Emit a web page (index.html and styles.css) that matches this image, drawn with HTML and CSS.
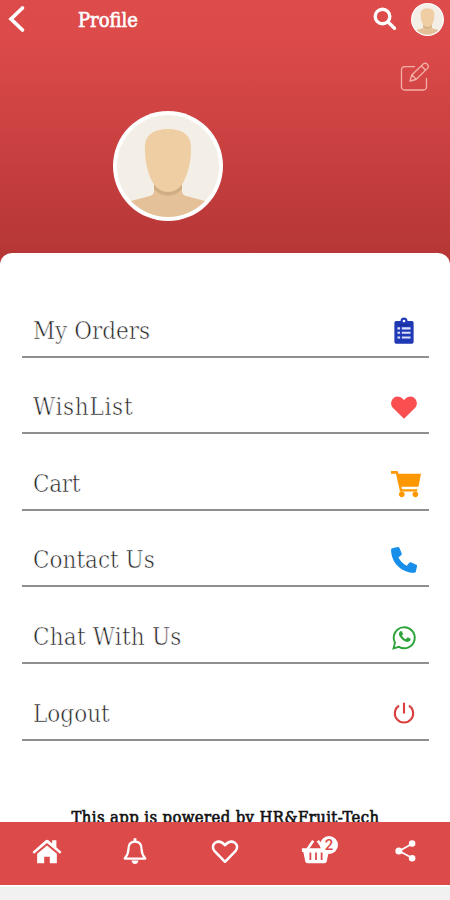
FILE: index.html
```html
<!DOCTYPE html>
<html lang="en">
<head>
<meta charset="utf-8">
<title>Profile</title>
<link rel="stylesheet" href="styles.css">
</head>
<body>
<svg class="defs" width="0" height="0">
  <symbol id="person" viewBox="0 0 110 110">
    <circle cx="55" cy="55" r="55" fill="#fff"/>
    <clipPath id="disc"><circle cx="55" cy="55" r="51"/></clipPath>
    <g clip-path="url(#disc)">
      <path fill="#f3eee6" d="M0 0h110v110H0z"/>
      <path fill="#e5c199" d="M41 70v10q0 4-4 5L18 90Q8 94 2 110h106q-6-16-16-20l-19-5q-4-1-4-5V70z"/>
      <path fill="#d1ad84" d="M41 72v6c8 9 20 9 28 0v-6z"/>
      <path fill="#efcea3" d="M32 38C31 24 41 18 55 18s24 6 23 20c0 13-3 25-8 34-4 6-9 9-15 9s-11-3-15-9c-5-9-8-21-8-34z"/>
    </g>
  </symbol>
</svg>
<div class="screen">
  <header class="hero">
    <div class="bar">
      <svg class="back" viewBox="0 0 18 28"><path d="M14.500 3 3 14l11.500 11"/></svg>
      <h1>Profile</h1>
      <svg class="search" viewBox="0 0 24 24"><circle cx="9.5" cy="9.5" r="7.300"/><path d="m15 15 6.500 6.300"/></svg>
      <svg class="mini"><use href="#person"/></svg>
    </div>
    <svg class="edit" viewBox="0 0 30 30"><path d="M15 4.700H4.500a3 3 0 0 0-3 3V25a3 3 0 0 0 3 3h19a3 3 0 0 0 3-3V16"/><path d="m10 19 1.800-6L23.500 1.800q2-1.300 3.800.4t.4 3.900L16 17.500zM12 13l4 4M21.500 4l4.200 4.200"/></svg>
    <svg class="avatar"><use href="#person"/></svg>
  </header>
  <main class="sheet">
    <ul class="menu">
      <li><span class="orders">My Orders</span>
        <svg viewBox="0 0 32 32"><path fill="#2039b5" d="M7 4.500h5q0-4 4-4t4 4h5q2 0 2 2v22q0 2-2 2H7q-2 0-2-2v-22q0-2 2-2z"/><circle cx="16" cy="4.500" r="1.500" fill="#fff"/><path d="M8.500 13h3m2 0h10M8.500 18h3m2 0h10M8.500 23.500h3m2 0h10" stroke="#dbe1ff" stroke-width="2.300"/><path d="M10.500 9h11" stroke="#152a91" stroke-width="1.500"/></svg></li>
      <li><span class="wish">WishList</span>
        <svg viewBox="0 0 32 32"><path fill="#fa4f50" d="M16 29.500 3.500 17C0 13.500.8 8 4.500 5.300c3.700-2.300 7.800-1.300 11.500 2.700 3.700-4 7.800-5 11.500-2.700 3.700 2.700 4.500 8.200 1 11.700z"/></svg></li>
      <li><span class="cart">Cart</span>
        <svg class="wide" viewBox="0 0 32 32"><path fill="#ff9800" d="M0 2h7l1 3h24l-2.700 14H11.200l.5 2.500h16.600l-.6 2.500H9.600L5.300 5H0z"/><circle cx="11.500" cy="27" r="3" fill="#ff9800"/><circle cx="26" cy="27" r="3" fill="#ff9800"/></svg></li>
      <li><span class="contact">Contact Us</span>
        <svg viewBox="0 0 32 32"><path fill="#168eea" d="m2.500 2.500 6.500-1.300q1.200-.2 1.700.9l2.700 6.500q.4 1-.5 1.800l-3.200 2.700q3.200 6.300 9.500 9.500l2.800-3.500q.7-.8 1.800-.4l6.200 2.700q1.200.5.9 1.800l-1.400 6.200q-.3 1.300-1.600 1.300C13 30.700 1.200 19 1.200 4q0-1.200 1.300-1.500z"/></svg></li>
      <li><span class="chat">Chat With Us</span>
        <svg viewBox="0 0 32 32"><path fill="none" stroke="#2da33b" stroke-width="2.200" d="m4 29 1.700-6.500A12 12 0 1 1 10.200 27.200z"/><path fill="#2da33b" d="M12 9.500c.7-.4 1.500-.3 1.800.4l1 2.300c.3.800-.8 1.600-1.200 2.100 1 2 2.300 3.200 4.500 4.200l1.500-1.700c.4-.5.800-.4 1.300-.2l2.200 1.100c.9.500.4 2.200-.5 3-1.500 1.300-3.300 1.100-5.600.1-3-1.300-5-3.700-6.300-6.200-1.100-2-.2-4.300 1.300-5.100z"/></svg></li>
      <li><span class="logout">Logout</span>
        <svg viewBox="0 0 32 32"><path fill="none" stroke="#dc3d3d" stroke-width="2.400" d="M10.300 6.400a10.500 10.500 0 1 0 11.400 0M16 3V15.500"/></svg></li>
    </ul>
    <p class="credit">This app is powered by HR&amp;Fruit-Tech</p>
  </main>
  <nav class="tabs">
    <svg class="home" viewBox="0 0 32 32"><path fill="#fff" d="m.5 17 14-12.500q1.500-1.200 3 0L21.500 8V4.500H26v7.500l5.500 5-1.700 2L16 7.500 2.200 19z"/><path fill="#fff" d="m16 10 10.500 9v10H19v-7h-6v7H5.500V19z"/></svg>
    <svg viewBox="0 0 32 32"><path fill="none" stroke="#fff" stroke-width="2.400" stroke-linejoin="round" d="M16 6c5.500 0 7 4 7 8 0 5 1.500 7 4 10H5c2.500-3 4-5 4-10 0-4 1.500-8 7-8z"/><path fill="#fff" d="M14.500 2.500h3v4h-3zM12.300 26h7.400q-.7 3.800-3.700 3.800T12.300 26z"/></svg>
    <svg viewBox="0 0 32 32"><path fill="none" stroke="#fff" stroke-width="2.700" stroke-linejoin="round" d="M16 27.500 4.900 16.200c-2.700-3-2.200-7 .6-9 3.300-2 7.300-1 10.500 2.700 3.200-3.700 7.200-4.700 10.500-2.700 2.800 2 3.300 6 .6 9z"/></svg>
    <div class="basket">
      <svg viewBox="0 0 32 32"><path fill="#fff" d="M1 13h30v4h-1.500l-2 10q-.4 2-2.500 2H7q-2.100 0-2.500-2l-2-10H1z"/><path fill="none" stroke="#fff" stroke-width="2.800" d="m7 14 6-9m11 9-6-9"/><path stroke="#dd4a4a" stroke-width="1.900" d="M10 17.500v8m6-8v8m6-8v8"/></svg>
      <b class="badge">2</b>
    </div>
    <svg class="share" viewBox="0 0 32 32"><path fill="none" stroke="#fff" stroke-width="2.200" d="M25 7 8 16.500 25 26"/><g fill="#fff"><circle cx="24.500" cy="7" r="4.200"/><circle cx="7.500" cy="16.500" r="4.500"/><circle cx="24.500" cy="26" r="4.200"/></g></svg>
  </nav>
</div>
</body>
</html>
```
FILE: styles.css
```css
* { box-sizing: border-box; }
body { margin: 0; background: #f1f1f1; font-family: "Roboto Slab", "DejaVu Serif Condensed", "DejaVu Serif", serif; }
svg { display: block; flex: none; }
.defs { position: absolute; }
.screen { display: flex; flex-direction: column; width: 450px; height: 900px; overflow: hidden; }
.hero { flex: none; height: 265px; background: linear-gradient(#dd4b4b 0, #dc4a4a 40px, #b63636 255px); }
.bar { display: flex; align-items: center; height: 38px; padding: 0 6px 0 8px; }
.back { width: 18px; height: 28px; fill: none; stroke: #fff; stroke-width: 3.7; stroke-linecap: round; }
h1 { margin: 0 auto 0 52px; padding-top: 1px; font-size: 20px; line-height: 40px; font-weight: 500; color: #fff; -webkit-text-stroke: .6px #fff; }
.search { width: 24px; height: 24px; margin-right: 14px; fill: none; stroke: #fff; stroke-width: 3.4; stroke-linecap: round; }
.mini { width: 33px; height: 33px; }
.edit { width: 30px; height: 30px; margin: 24px 20px 0 auto; fill: none; stroke: #f3b0a8; stroke-width: 1.3; stroke-linejoin: round; }
.avatar { width: 110px; height: 110px; margin: 19px 0 0 113.4px; }
.sheet { flex: none; height: 569px; margin-top: -12px; padding: 28px 21px 0 22px; border-radius: 12px 12px 0 0; background: #fff; overflow: hidden; }
.menu { margin: 0; padding: 0; list-style: none; }
.menu li { display: flex; align-items: flex-end; justify-content: space-between; height: 76.6px; padding: 0 11px 10px 11px; border-bottom: 2px solid #8f8f8f; font-size: 24px; line-height: 30px; color: #222; }
.menu span { -webkit-text-stroke: .55px #fff; }
.menu .wish { letter-spacing: .7px; }
.menu .chat { letter-spacing: .2px; }
.menu .cart { letter-spacing: -.3px; }
.menu svg { width: 28px; height: 28px; margin-bottom: 1px; }
.menu .wide { width: 30px; height: 30px; margin: 0 -3px 0 0; }
.credit { margin: 66px 0 0; text-align: center; white-space: nowrap; font-size: 16.5px; line-height: 22px; letter-spacing: .4px; color: #111; -webkit-text-stroke: .6px #111; }
.tabs { flex: none; display: grid; grid-template-columns: repeat(5, 90px); justify-items: center; height: 63px; padding-top: 14px; background: #dd4a4a; box-shadow: 0 2px #fff; }
.tabs svg { width: 30px; height: 30px; }
.tabs .home { margin-left: 4px; }
.tabs .share { width: 25px; height: 25px; margin: 2px 0 0 0; }
.basket { position: relative; margin-left: 2px; }
.badge { position: absolute; left: 19px; top: 0; width: 18px; height: 18px; border-radius: 50%; background: #fff; color: #dd4a4a; font: 500 15px/19px "Roboto", sans-serif; text-align: center; }
```
